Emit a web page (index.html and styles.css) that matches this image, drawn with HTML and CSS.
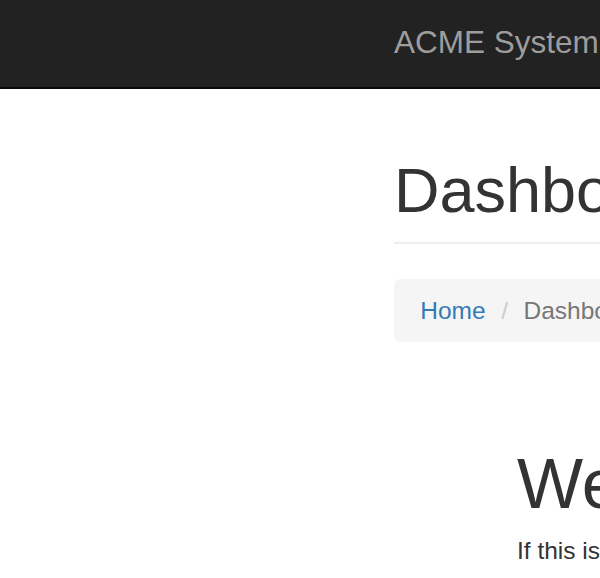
FILE: index.html
```html
<!DOCTYPE html>
<html lang="en">
<head>
<meta charset="utf-8">
<title>ACME System - Dashboard</title>
<link rel="stylesheet" href="styles.css">
</head>
<body>
<nav class="navbar">
  <a class="brand" href="#">ACME System</a>
</nav>
<main class="page">
  <div class="page-header">
    <h1 class="title">Dashboard</h1>
  </div>
  <ol class="breadcrumb">
    <li class="crumb"><a class="crumb-link" href="#">Home</a></li>
    <li class="crumb crumb-active">Dashboard</li>
  </ol>
  <section class="welcome">
    <h1 class="welcome-title">Welcome to ACME System</h1>
    <p class="welcome-text">If this is your first visit, please take a moment to explore.</p>
  </section>
</main>
</body>
</html>
```
FILE: styles.css
```css
html, body {
  margin: 0;
  padding: 0;
  overflow: hidden;
  background: #fff;
}
body {
  font-family: "Liberation Sans", Arial, Helvetica, sans-serif;
  color: #333;
  width: 600px;
  height: 578px;
}
.navbar {
  height: 87px;
  background: #222;
  border-bottom: 2px solid #080808;
  padding-left: 394px;
  white-space: nowrap;
}
.brand {
  display: block;
  padding-top: 25px;
  font-size: 31.5px;
  line-height: 35px;
  color: #9d9d9d;
  text-decoration: none;
}
.page {
  padding-left: 394px;
  white-space: nowrap;
  width: 1400px;
}
.page-header {
  margin-top: 67px;
  padding-bottom: 16.5px;
  border-bottom: 2px solid #eee;
}
.title {
  margin: 0;
  font-size: 63px;
  line-height: 69.3px;
  font-weight: 500;
  color: #333;
}
.breadcrumb {
  margin: 35px 0 0;
  padding: 14px 26.25px;
  list-style: none;
  background: #f5f5f5;
  border-radius: 7px;
  font-size: 24.5px;
  line-height: 35px;
}
.crumb {
  display: inline-block;
}
.crumb + .crumb::before {
  content: "/\00a0";
  padding: 0 8.75px;
  color: #ccc;
}
.crumb-link {
  color: #337ab7;
  text-decoration: none;
}
.crumb-active {
  color: #777;
}
.welcome {
  margin-top: 104px;
  padding-left: 123px;
}
.welcome-title {
  margin: 0;
  font-size: 70px;
  line-height: 77px;
  font-weight: 500;
  color: #333;
}
.welcome-text {
  margin: 10px 0 0;
  font-size: 24.5px;
  line-height: 35px;
  color: #333;
}
```
